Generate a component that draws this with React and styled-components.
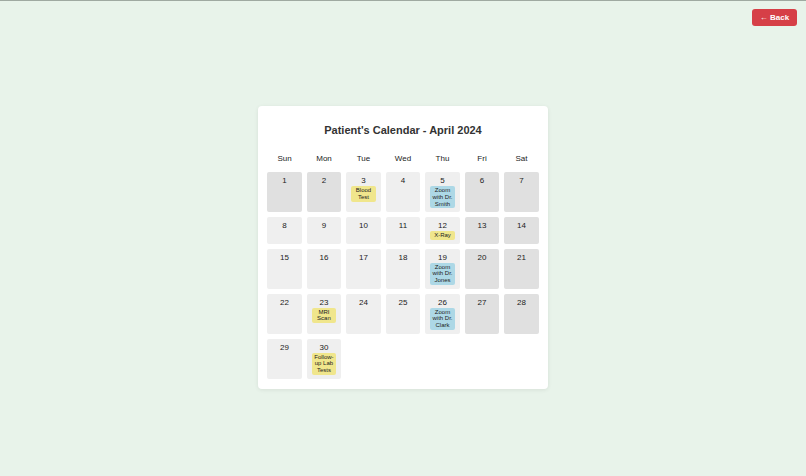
import React from 'react'
import styled, { createGlobalStyle } from 'styled-components'

const GlobalStyle = createGlobalStyle`
  html, body {
    margin: 0;
    padding: 0;
    background: #e8f3ea;
  }
  body {
    font-family: "Liberation Sans", Arial, sans-serif;
    border-top: 1px solid #9fa9a1;
  }
`

const days = ['Sun', 'Mon', 'Tue', 'Wed', 'Thu', 'Fri', 'Sat']

const events = {
  3: { label: 'Blood Test', kind: 'lab' },
  5: { label: 'Zoom with Dr. Smith', kind: 'zoom' },
  12: { label: 'X-Ray', kind: 'lab' },
  19: { label: 'Zoom with Dr. Jones', kind: 'zoom' },
  23: { label: 'MRI Scan', kind: 'lab' },
  26: { label: 'Zoom with Dr. Clark', kind: 'zoom' },
  30: { label: 'Follow-up Lab Tests', kind: 'lab' },
}

const shaded = [1, 2, 6, 7, 13, 14, 20, 21, 27, 28]

const App = () => {
  const dates = Array.from({ length: 30 }, (_, i) => i + 1)

  return (
    <Page>
      <GlobalStyle />
      <TopBar>
        <BackButton>← Back</BackButton>
      </TopBar>
      <Card>
        <Title>Patient's Calendar - April 2024</Title>
        <Header>
          {days.map((d) => (
            <DayName key={d}>{d}</DayName>
          ))}
        </Header>
        <Grid>
          {dates.map((d) => (
            <Cell key={d} $shaded={shaded.includes(d)}>
              <Num>{d}</Num>
              {events[d] && <Badge $kind={events[d].kind}>{events[d].label}</Badge>}
            </Cell>
          ))}
        </Grid>
      </Card>
    </Page>
  )
}

export default App

const Page = styled.div`
  min-height: 475px;
  display: flex;
  flex-direction: column;
  align-items: center;
`

const TopBar = styled.div`
  align-self: stretch;
  display: flex;
  justify-content: flex-end;
  padding: 8px 9px 0 0;
`

const BackButton = styled.button`
  font-family: "Liberation Sans", Arial, sans-serif;
  font-size: 8px;
  font-weight: 700;
  color: #fff;
  background: #d63f47;
  border: none;
  border-radius: 3px;
  width: 45px;
  height: 17px;
  padding: 0;
  cursor: pointer;
`

const Card = styled.div`
  margin-top: 80px;
  width: 290px;
  box-sizing: border-box;
  background: #fff;
  border-radius: 4px;
  box-shadow: 0 1px 4px rgba(0, 0, 0, 0.08);
  padding: 16px 9px 10px;
`

const Title = styled.h2`
  margin: 0 0 16px;
  font-size: 11px;
  font-weight: 700;
  color: #333;
  text-align: center;
  line-height: 16px;
`

const Header = styled.div`
  display: grid;
  grid-template-columns: repeat(7, 1fr);
  column-gap: 4.5px;
  margin-bottom: 8px;
`

const DayName = styled.div`
  font-size: 8px;
  color: #222;
  text-align: center;
  line-height: 10px;
`

const Grid = styled.div`
  display: grid;
  grid-template-columns: repeat(7, 1fr);
  gap: 4.6px;
`

const Cell = styled.div`
  background: ${(p) => (p.$shaded ? '#e0e0e0' : '#efefef')};
  border-radius: 2px;
  padding: 4px 5px;
  min-height: 19px;
  display: flex;
  flex-direction: column;
  align-items: stretch;
`

const Num = styled.div`
  font-size: 8px;
  line-height: 10px;
  color: #222;
  text-align: center;
`

const Badge = styled.div`
  background: ${(p) => (p.$kind === 'zoom' ? '#add8e6' : '#f0e68c')};
  border-radius: 2px;
  font-size: 6px;
  line-height: 6.8px;
  padding: 1px;
  color: #222;
  text-align: center;
`
